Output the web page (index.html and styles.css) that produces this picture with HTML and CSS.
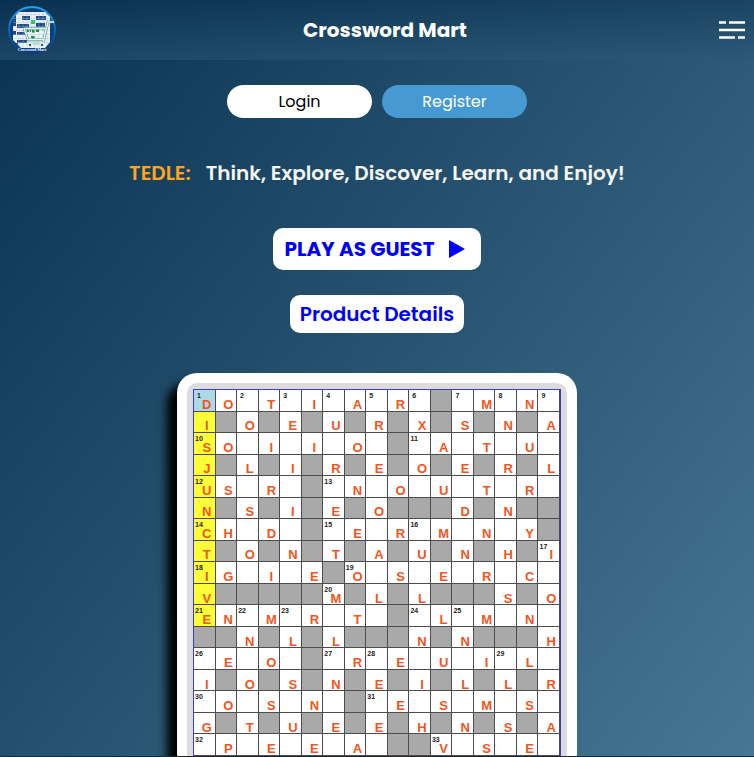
FILE: index.html
```html
<!DOCTYPE html>
<html lang="en">
<head>
<meta charset="utf-8">
<meta name="viewport" content="width=device-width, initial-scale=1">
<title>Crossword Mart</title>
<link rel="stylesheet" href="styles.css">
</head>
<body>
<header class="topbar">
  <a class="logo" href="#" aria-label="Crossword Mart home">
    <svg viewBox="0 0 50 50" width="50" height="50" aria-hidden="true">
      <defs>
        <linearGradient id="ring" x1="0" y1="0" x2="0" y2="1">
          <stop offset="0" stop-color="#1fa5ea"/>
          <stop offset=".55" stop-color="#0b5fae"/>
          <stop offset="1" stop-color="#0a3a7c"/>
        </linearGradient>
        <clipPath id="disc"><path d="M6 13 12 7h26l5 5v25l-5 6H14l-8-8z"/></clipPath>
      </defs>
      <circle cx="25" cy="25" r="23" fill="#0a3f7e" stroke="url(#ring)" stroke-width="2"/>
      <g clip-path="url(#disc)">
        <rect x="6" y="6" width="37" height="37" fill="#eef2f8"/>
        <path fill="#174a86" d="M6 10h3v11H6zM15 11h8v4h-8zM29 11h10v4H29zM10 19h12v4H10zM29 18h9v4h-9zM6 26h3v4H6zM10 27h8v3h-8zM10 35h10v3H10zM6 38h5v3H6z"/>
        <path stroke="#a9bbd3" stroke-width=".4" d="M6 9.500h37M6 13.500h37M6 17.500h37M6 21.500h37M6 25.500h37M6 29.500h37M6 33.500h37M6 37.500h37M12 6v37M16 6v37M20 6v37M24 6v37M28 6v37M32 6v37M36 6v37M40 6v37" fill="none"/>
      </g>
      <path fill="#2fc36b" d="M24 15h4v4h-4z"/>
      <path fill="#168a4c" d="M20 24h4v3h-4zM25 25h3v3h-3zM29 24h3v3h-3zM24 31h4v3h-4z"/>
      <g fill="none" stroke="#4c8a86" stroke-width="2.600">
        <path d="M47 17h-6l-5 21H20M17 23.500h22M17 23.500l4 11h16"/>
      </g>
      <g fill="none" stroke="#e4f6ee" stroke-width="1.500">
        <path d="M47 17h-6l-5 21H20M17 23.500h22M17 23.500l4 11h16"/>
        <path stroke-width=".8" d="M22 24l2 10M28 24v10M34 24l-1 10M18 28h20"/>
        <circle cx="23" cy="40" r="2" fill="#2b5d80"/><circle cx="35" cy="40" r="2" fill="#2b5d80"/>
      </g>
      <text class="logo-text" x="25" y="46" text-anchor="middle">Crossword Mart</text>
    </svg>
  </a>
  <h1 class="title">Crossword Mart</h1>
  <button class="menu" type="button" aria-label="Menu">
    <svg viewBox="0 0 26 20" width="26" height="20" aria-hidden="true">
      <path d="M0 2.500h7M10 2.500h16M0 10h26M0 17.500h16M19 17.500h7" stroke="#fff" stroke-width="2.400" fill="none"/>
    </svg>
  </button>
</header>
<main class="content">
  <nav class="account">
    <a class="pill pill-light" href="#">Login</a>
    <a class="pill pill-blue" href="#">Register</a>
  </nav>
  <p class="tagline"><span class="brand">TEDLE:</span><span>Think, Explore, Discover, Learn, and Enjoy!</span></p>
  <a class="box play" href="#">PLAY AS GUEST
    <svg viewBox="0 0 16 18" width="16" height="18" aria-hidden="true"><path d="M0 0 16 9 0 18z" fill="#00f"/></svg>
  </a>
  <a class="box details" href="#">Product Details</a>
  <section class="card" aria-label="Crossword puzzle">
    <div class="frame"><div class="board" id="board"></div></div>
  </section>
</main>
<script src="script.js"></script>
</body>
</html>
```
FILE: styles.css
```css
* { box-sizing: border-box; }

body {
  margin: 0;
  height: 100vh;
  overflow: hidden;
  display: flex;
  flex-direction: column;
  border-bottom: 1px solid #1b2733;
  background: linear-gradient(128deg, #083250, #477692);
  color: #fff;
  font-family: Poppins, Inter, sans-serif;
}

a { text-decoration: none; }

.topbar {
  flex: none;
  display: flex;
  align-items: center;
  justify-content: space-between;
  height: 60px;
  padding: 0 9px 0 7px;
  background: linear-gradient(rgba(8, 48, 78, .5), rgba(43, 88, 120, .5));
}

.logo { display: flex; }

.logo-text {
  fill: #fff;
  font: bold 4px "Liberation Serif", serif;
}

.title {
  margin: 0;
  font-size: 20px;
  font-weight: 700;
}

.menu {
  display: flex;
  justify-content: flex-end;
  width: 32px;
  padding: 0;
  border: 0;
  background: none;
}

.content {
  flex: 1;
  min-height: 0;
  display: flex;
  flex-direction: column;
  align-items: center;
  padding-top: 25px;
}

.content > * { flex: none; }

.account {
  display: flex;
  gap: 10px;
}

.pill {
  width: 145px;
  border-radius: 17px;
  line-height: 33px;
  text-align: center;
  font-size: 16px;
}

.pill-light { background: #fff; color: #000; }
.pill-blue { background: #4699d1; color: #fff; }

.tagline {
  display: flex;
  gap: 15px;
  margin: 40px 0;
  line-height: 30px;
  font-size: 20px;
  font-weight: 600;
  color: #f5f5f5;
}

.brand { color: #ffa520; }

.box {
  display: flex;
  align-items: center;
  border-radius: 10px;
  background: #fff;
  color: #00f;
  font-size: 20px;
  font-weight: 600;
}

.play {
  gap: 15px;
  height: 42px;
  padding: 0 16px 0 12px;
  font-weight: 700;
}

.details {
  height: 38px;
  margin-top: 25px;
  padding: 0 10px;
}

.card {
  width: 400px;
  max-width: 96%;
  margin-top: 40px;
  padding: 10px;
  border-radius: 20px;
  background: #fff;
  box-shadow: -10px 10px 10px #000;
}

.frame {
  padding: 6px;
  border-radius: 10px;
  background: #dcdcdc;
}

.board {
  display: grid;
  grid-template-columns: repeat(17, 1fr);
  grid-auto-rows: 1fr;
  aspect-ratio: 1;
  border: 1px solid #3c3cc4;
  background: #fff;
  font-family: "Liberation Sans", sans-serif;
  font-weight: 700;
}

.cell {
  display: grid;
  min-width: 0;
  min-height: 0;
  box-shadow: inset -1px -1px 0 #4c4c4c;
}

.block { background: #a9a9a9; }
.active { background: #ffff38; }
.current { background: #add8e6; }

.letter,
.number {
  grid-area: 1 / 1;
  line-height: 1;
}

.letter {
  place-self: center;
  padding: 7px 0 0 4px;
  color: #f2551e;
  font-size: 13px;
}

.number {
  width: 10px;
  padding-top: 2px;
  color: #222;
  font-size: 7px;
  text-align: center;
}
```
FILE: script.js
```js
// "#" is a blocked cell, "." is an empty one.
const rows = [
  "DO.T.I.A.R.#.M.N.",
  "I#O#E#U#R#X#S#N#A",
  "SO.I.I.O.#.A.T.U.",
  "J#L#I#R#E#O#E#R#L",
  "US.R.#.N.O.U.T.R.",
  "N#S#I#E#O###D#N##",
  "CH.D.#.E.R.M.N.Y#",
  "T#O#N#T#A#U#N#H#I",
  "IG.I.E#O.S.E.R.C.",
  "V#####M#L#L###S#O",
  "EN.M.R.T.#.L.M.N.",
  "##N#L#L###N#N###H",
  ".E.O.#.R.E.U.I.L.",
  "I#O#S#N#E#I#L#L#R",
  ".O.S.N.#.E.S.M.S.",
  "G#T#U#E#E#H#N#S#A",
  ".P.E.E.A.##V.S.E."
];

// Clue starts as [row, column]; the clue number is the position in the list.
const starts = [
  [0, 0], [0, 2], [0, 4], [0, 6], [0, 8], [0, 10], [0, 12], [0, 14], [0, 16],
  [2, 0], [2, 10], [4, 0], [4, 6], [6, 0], [6, 6], [6, 10], [7, 16], [8, 0],
  [8, 7], [9, 6], [10, 0], [10, 2], [10, 4], [10, 10], [10, 12], [12, 0],
  [12, 6], [12, 8], [12, 14], [14, 0], [14, 8], [16, 0], [16, 11]
];

const board = document.getElementById("board");

function addText(cell, className, text) {
  const span = document.createElement("span");
  span.className = className;
  span.textContent = text;
  cell.append(span);
}

rows.forEach((row, r) => {
  [...row].forEach((value, c) => {
    const cell = document.createElement("div");
    cell.className = "cell";
    if (value === "#") cell.classList.add("block");
    if (c === 0 && r === 0) cell.classList.add("current");
    if (c === 0 && r > 0 && r < 11) cell.classList.add("active");
    const clue = starts.findIndex(([y, x]) => y === r && x === c) + 1;
    if (clue) addText(cell, "number", clue);
    if (/[A-Z]/.test(value)) addText(cell, "letter", value);
    board.append(cell);
  });
});
```
